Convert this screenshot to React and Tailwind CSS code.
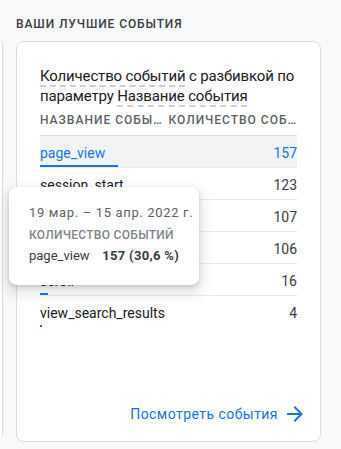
import React from 'react';

const rows = [
  { name: 'page_view', value: 157 },
  { name: 'session_start', value: 123 },
  { name: 'first_visit', value: 107 },
  { name: 'user_engagement', value: 106 },
  { name: 'scroll', value: 16 },
  { name: 'view_search_results', value: 4 },
];

const App = () => {
  const max = 157;

  return (
    <div className="relative flex w-[341px] h-[449px] overflow-hidden bg-[#f8f9fa] font-['Roboto',sans-serif]">
      {/* край соседней карточки */}
      <div className="w-[3px] mt-[41px] h-[396px] bg-white border-r border-[#dadce0] rounded-r-[4px]" />

      <div className="ml-[13px] flex flex-col">
        <div className="h-[41px] pt-[14px] text-[12px] leading-[20px] font-medium tracking-[0.9px] text-[#3c4043] whitespace-nowrap">
          ВАШИ ЛУЧШИЕ СОБЫТИЯ
        </div>

        <div className="w-[305px] h-[401px] bg-white border border-[#dadce0] rounded-[8px] px-[23px] flex flex-col">
          <div className="pt-[24px] text-[15px] leading-[20px] tracking-[-0.15px] text-[#202124] whitespace-nowrap">
            <div>
              <span className="underline decoration-dashed decoration-[#bdc1c6] underline-offset-[5px]">Количество событий</span>
              <span> с разбивкой по</span>
            </div>
            <div>
              <span>параметру </span>
              <span className="underline decoration-dashed decoration-[#bdc1c6] underline-offset-[5px]">Название события</span>
            </div>
          </div>

          <div className="mt-[4px] h-[25px] flex items-start text-[12px] leading-[20px] font-medium tracking-[1px] text-[#5f6368] whitespace-nowrap">
            <span className="w-[126px]">НАЗВАНИЕ СОБЫ…</span>
            <span className="flex-1 text-right">КОЛИЧЕСТВО СОБ…</span>
          </div>

          <div className="border-t border-[#dadce0]">
            {rows.map((r, i) => (
              <div
                key={r.name}
                className={`h-[32px] pt-[7px] ${i < rows.length - 1 ? 'border-b border-[#e8eaed]' : ''} ${i === 0 ? 'bg-[#f1f3f4]' : ''}`}
              >
                <div className={`flex justify-between text-[14px] leading-[20px] ${i === 0 ? 'text-[#1a73e8]' : 'text-[#202124]'}`}>
                  <span>{r.name}</span>
                  <span className={i === 0 ? 'text-[#1a73e8]' : 'text-[#3c4043]'}>{r.value}</span>
                </div>
                <div className="mt-[2px] h-[2px] bg-[#1a73e8]" style={{ width: Math.max(2, Math.round((r.value / max) * 78)) }} />
              </div>
            ))}
          </div>

          <div className="mt-auto mb-[15px] -mr-[10px] flex items-center justify-end text-[14px] leading-[20px] text-[#1a73e8] tracking-[0.45px]">
            <span>Посмотреть события</span>
            <svg viewBox="0 0 24 24" className="w-6 h-6 ml-[5px]" fill="currentColor">
              <path d="M12 4l-1.41 1.41L16.17 11H4v2h12.17l-5.58 5.59L12 20l8-8z" />
            </svg>
          </div>
        </div>
      </div>

      {/* подсказка */}
      <div className="absolute left-[9px] top-[187px] w-[190px] h-[98px] bg-white rounded-[8px] shadow-[0_2px_4px_rgba(60,64,67,0.2),0_6px_12px_4px_rgba(60,64,67,0.12)] px-[20px] pt-[16px] whitespace-nowrap">
        <div className="text-[13px] leading-[20px] tracking-[0.65px] text-[#5f6368]">19 мар. – 15 апр. 2022 г.</div>
        <div className="mt-[2px] text-[12px] leading-[20px] font-medium text-[#80868b] tracking-[0.3px]">КОЛИЧЕСТВО СОБЫТИЙ</div>
        <div className="mt-[1px] flex text-[13px] leading-[20px] text-[#3c4043]">
          <span className="w-[77px]">page_view</span>
          <span className="font-bold tracking-[0.3px]">157 (30,6 %)</span>
        </div>
      </div>
    </div>
  );
};

export default App;
